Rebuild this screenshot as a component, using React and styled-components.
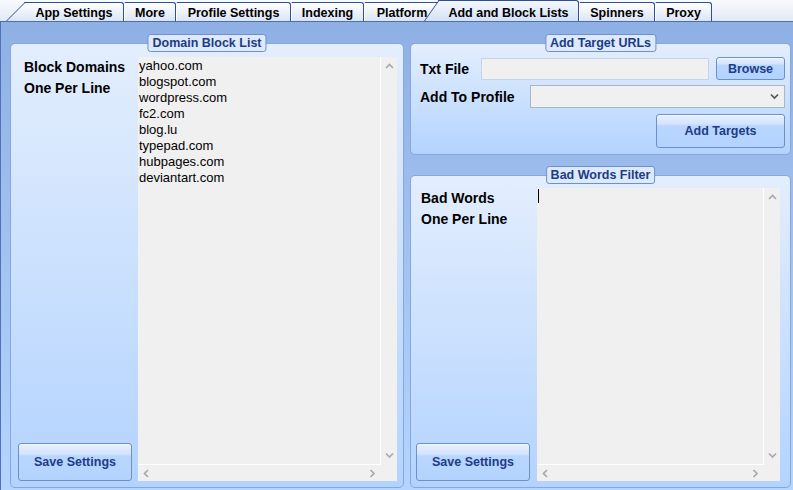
import styled, { createGlobalStyle, css } from 'styled-components';

const Global = createGlobalStyle`
  html, body {
    margin: 0;
    padding: 0;
    width: 793px;
    height: 490px;
    overflow: hidden;
    background: #f4f7fc;
  }
`;

const NAVY = '#2c4f97';
const FONT = '"Liberation Sans", Arial, sans-serif';

const Window = styled.div`
  display: flex;
  flex-direction: column;
  width: 793px;
  height: 490px;
  font-family: ${FONT};
`;

const TabStrip = styled.div`
  display: flex;
  align-items: flex-end;
  height: 21px;
  border-bottom: 1px solid #4a6fb5;
  background: linear-gradient(#f8fafd, #e2e9f6);
`;

const Tab = styled.div`
  position: relative;
  z-index: ${p => (p.$active ? 3 : 1)};
  box-sizing: border-box;
  flex: none;
  width: ${p => p.$w}px;
  height: ${p => (p.$active ? 21 : 19)}px;
  margin-left: ${p => p.$ml || 0}px;
  display: flex;
  align-items: flex-end;
  justify-content: center;
  padding-bottom: 1px;
  font: bold 12.5px/14px ${FONT};
  color: #000;
  white-space: nowrap;
  background: ${p => (p.$active ? 'linear-gradient(#f4f8fe, #d3e1f6)' : 'linear-gradient(#ffffff, #dbe5f6)')};
  border-top: 1px solid ${NAVY};
  border-right: 1px solid ${NAVY};
  border-left: 1px solid ${p => (p.$slant ? 'transparent' : '#ffffff')};
  border-top-right-radius: 3px;
  ${p => p.$slant && css`
    &::before {
      content: "";
      position: absolute;
      z-index: -1;
      left: ${-p.$slant}px;
      top: -1px;
      bottom: 0;
      width: ${p.$slant + 8}px;
      background: inherit;
      border-left: 1px solid ${NAVY};
      border-top: 1px solid ${NAVY};
      transform: skewX(${p.$skew}deg);
      transform-origin: bottom left;
    }
  `}
`;

const Body = styled.div`
  flex: 1;
  display: flex;
  gap: 6px;
  padding: 21px 2px 2px 9px;
  border-left: 1px solid #4f72b8;
  background: linear-gradient(#8fb0e4, #b5d4fe);
`;

const Group = styled.div`
  position: relative;
  box-sizing: border-box;
  display: flex;
  width: ${p => (p.$w ? `${p.$w}px` : 'auto')};
  height: ${p => (p.$h ? `${p.$h}px` : 'auto')};
  flex: ${p => (p.$grow ? 1 : 'none')};
  border: 1px solid #86a8dd;
  border-radius: 5px;
  background: linear-gradient(#e3eefd, #b3d3ff);
  padding: ${p => p.$pad};
  gap: ${p => p.$gap || 0}px;
`;

const GroupTitle = styled.div`
  position: absolute;
  top: -10px;
  left: 50%;
  transform: translateX(-50%);
  box-sizing: border-box;
  height: 18px;
  padding: 0 4px;
  border: 1px solid #6f90cc;
  border-radius: 3px;
  background: #dde9fc;
  font: bold 12.5px/16px ${FONT};
  color: #1c3c85;
  white-space: nowrap;
`;

const RightColumn = styled.div`
  width: 381px;
  display: flex;
  flex-direction: column;
  gap: 20px;
`;

const SideColumn = styled.div`
  width: 114px;
  flex: none;
  display: flex;
  flex-direction: column;
  justify-content: space-between;
`;

const Labels = styled.div`
  padding-left: ${p => p.$indent}px;
  font: bold 14px/21px ${FONT};
  color: #000;
`;

const Button = styled.button`
  box-sizing: border-box;
  flex: none;
  width: ${p => p.$w}px;
  height: ${p => p.$h}px;
  padding: 0;
  border: 1px solid #6f8fc9;
  border-radius: 3px;
  background: linear-gradient(#e6f0ff 0%, #d3e4ff 28%, #b8d6ff 34%, #b3d3ff 100%);
  box-shadow: inset 0 1px 0 #f3f8ff;
  font: bold 12.5px ${FONT};
  color: #1e3c88;
  align-self: ${p => p.$align || 'auto'};
`;

const TextBox = styled.div`
  flex: 1;
  display: grid;
  grid-template-columns: 1fr 16px;
  grid-template-rows: 1fr 16px;
  background: #f0f0f0;
  min-width: 0;
`;

const TextArea = styled.div`
  border-right: 1px solid #ffffff;
  border-bottom: 1px solid #ffffff;
  padding: 1px 0 0 1px;
  font: 13px/16px ${FONT};
  color: #000;
  overflow: hidden;
`;

const Caret = styled.span`
  display: block;
  width: 1px;
  height: 14px;
  background: #000;
`;

const VBar = styled.div`
  display: flex;
  flex-direction: column;
  justify-content: space-between;
  align-items: center;
  padding: 6px 0 6px;
`;

const HBar = styled.div`
  display: flex;
  justify-content: space-between;
  align-items: center;
  padding: 0 5px;
`;

const Row = styled.div`
  display: flex;
  align-items: center;
  gap: ${p => p.$gap || 0}px;
  margin-bottom: ${p => p.$mb || 0}px;
`;

const FieldLabel = styled.div`
  width: ${p => p.$w}px;
  flex: none;
  font: bold 14px ${FONT};
  color: #000;
  white-space: nowrap;
`;

const Input = styled.div`
  box-sizing: border-box;
  flex: 1;
  height: 22px;
  background: #f0f0f0;
  border: 1px solid #c6d4e9;
`;

const Select = styled.div`
  box-sizing: border-box;
  flex: 1;
  height: 23px;
  display: flex;
  align-items: center;
  justify-content: flex-end;
  padding-right: 5px;
  background: #f0f0f0;
  border: 1px solid #aab6c8;
`;

const Stack = styled.div`
  flex: 1;
  display: flex;
  flex-direction: column;
`;

const Chevron = ({ dir, color = '#a9a9a9' }) => {
  const paths = {
    up: 'M1 5 L4.5 1.5 L8 5',
    down: 'M1 1.5 L4.5 5 L8 1.5',
    left: 'M5 1 L1.5 4.5 L5 8',
    right: 'M1.5 1 L5 4.5 L1.5 8',
  };
  const horiz = dir === 'left' || dir === 'right';
  return (
    <svg width={horiz ? 7 : 9} height={horiz ? 9 : 7} viewBox={horiz ? '0 0 7 9' : '0 0 9 7'}>
      <path d={paths[dir]} fill="none" stroke={color} strokeWidth="1.7" />
    </svg>
  );
};

const ScrollBox = ({ children }) => (
  <TextBox>
    <TextArea>{children}</TextArea>
    <VBar>
      <Chevron dir="up" />
      <Chevron dir="down" />
    </VBar>
    <HBar>
      <Chevron dir="left" />
      <Chevron dir="right" />
    </HBar>
    <div />
  </TextBox>
);

const tabs = [
  { label: 'App Settings', w: 100, slant: 19, skew: -45 },
  { label: 'More', w: 52 },
  { label: 'Profile Settings', w: 115 },
  { label: 'Indexing', w: 73 },
  { label: 'Platform', w: 76 },
  { label: 'Add and Block Lists', w: 141, ml: -2, slant: 15, skew: -35, active: true },
  { label: 'Spinners', w: 76 },
  { label: 'Proxy', w: 57 },
];

const domains = [
  'yahoo.com',
  'blogspot.com',
  'wordpress.com',
  'fc2.com',
  'blog.lu',
  'typepad.com',
  'hubpages.com',
  'deviantart.com',
];

export default function App() {
  return (
    <Window>
      <Global />
      <TabStrip>
        <div style={{ width: 24, flex: 'none' }} />
        {tabs.map(t => (
          <Tab key={t.label} $w={t.w} $ml={t.ml} $slant={t.slant} $skew={t.skew} $active={t.active}>
            {t.label}
          </Tab>
        ))}
      </TabStrip>
      <Body>
        <Group $w={394} $pad="13px 6px 6px 7px" $gap={6}>
          <GroupTitle>Domain Block List</GroupTitle>
          <SideColumn>
            <Labels $indent={6}>
              Block Domains
              <br />
              One Per Line
            </Labels>
            <Button $w={114} $h={38}>Save Settings</Button>
          </SideColumn>
          <ScrollBox>
            {domains.map(d => (
              <div key={d}>{d}</div>
            ))}
          </ScrollBox>
        </Group>
        <RightColumn>
          <Group $h={112} $pad="13px 5px 6px 9px">
            <GroupTitle>Add Target URLs</GroupTitle>
            <Stack>
              <Row $gap={7} $mb={5}>
                <FieldLabel $w={54}>Txt File</FieldLabel>
                <Input />
                <Button $w={69} $h={23}>Browse</Button>
              </Row>
              <Row $mb={6}>
                <FieldLabel $w={110}>Add To Profile</FieldLabel>
                <Select>
                  <Chevron dir="down" color="#555" />
                </Select>
              </Row>
              <Button $w={129} $h={34} $align="flex-end">Add Targets</Button>
            </Stack>
          </Group>
          <Group $grow $pad="12px 10px 6px 5px" $gap={7}>
            <GroupTitle>Bad Words Filter</GroupTitle>
            <SideColumn>
              <Labels $indent={5}>
                Bad Words
                <br />
                One Per Line
              </Labels>
              <Button $w={114} $h={38}>Save Settings</Button>
            </SideColumn>
            <ScrollBox>
              <Caret />
            </ScrollBox>
          </Group>
        </RightColumn>
      </Body>
    </Window>
  );
}
